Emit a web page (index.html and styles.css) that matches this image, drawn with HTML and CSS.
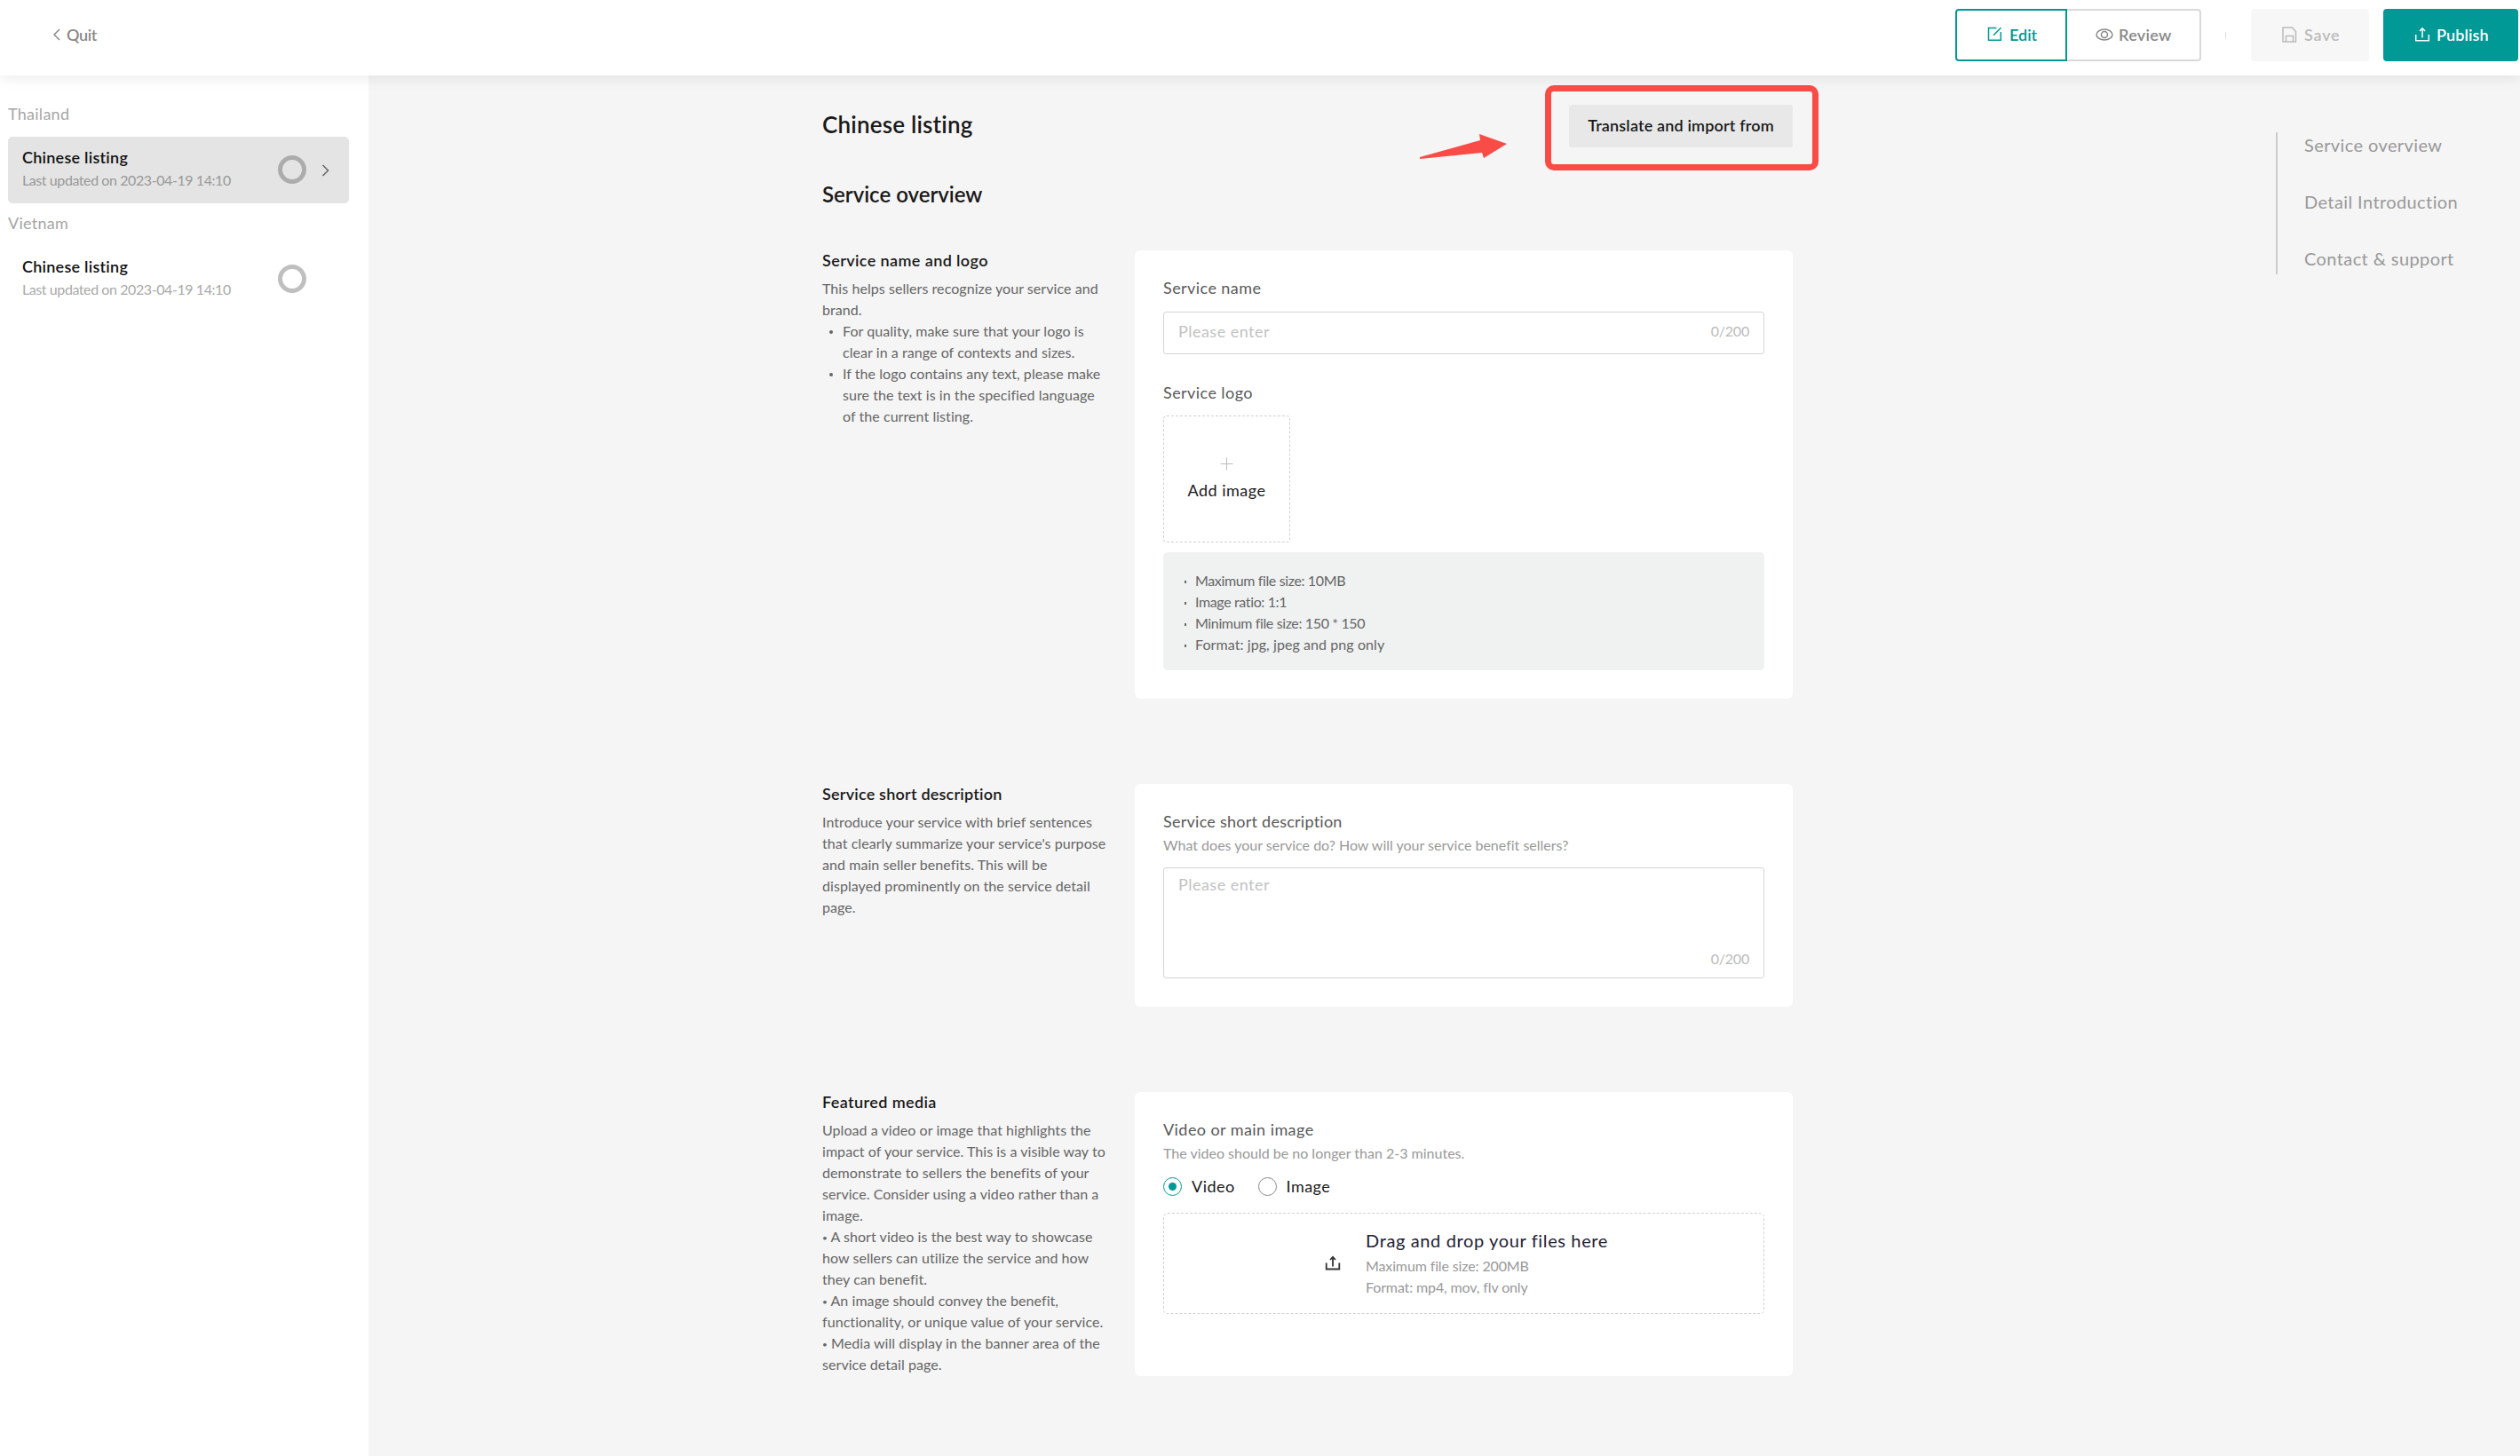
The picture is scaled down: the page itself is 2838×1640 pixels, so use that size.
FILE: index.html
```
<!DOCTYPE html>
<html lang="en">

<head>
    <meta charset="UTF-8">
    <title>Chinese listing</title>
    <link rel="stylesheet" href="styles.css">
</head>

<body>
    <header class="header">
        <a class="quit">
            <svg width="8" height="14" viewBox="0 0 8 14"><path d="M7 1L1 7l6 6" /></svg>
            <span>Quit</span>
        </a>
        <div class="actions">
            <div class="tabs">
                <button class="tab tab-edit current">
                    <svg width="17" height="17" viewBox="0 0 17 17"><path d="M10.500 1.500H1.500V15.200H15.300V6M7 9.800L15.500 1.200" /></svg>
                    <span>Edit</span>
                </button>
                <button class="tab tab-review">
                    <svg width="20" height="14" viewBox="0 0 20 14"><ellipse cx="10" cy="7" rx="9" ry="6" /><ellipse cx="10" cy="7" rx="3.500" ry="3.500" /></svg>
                    <span>Review</span>
                </button>
            </div>
            <i class="divider"></i>
            <button class="btn btn-save">
                <svg width="17" height="18" viewBox="0 0 17 18"><path d="M1 1H11.500L15.500 5.500V17H1zM4.500 17V10.500H12.500V17" /></svg>
                <span>Save</span>
            </button>
            <button class="btn btn-publish">
                <svg width="18" height="17" viewBox="0 0 18 17"><path d="M1.700 9V15.700H16.300V9M9 12.500V2M6 5L9 1.800L12 5" /></svg>
                <span>Publish</span>
            </button>
        </div>
    </header>

    <div class="wrap">
        <aside class="sidebar">
            <div class="region">Thailand</div>
            <div class="item active">
                <div class="item-text">
                    <div class="item-title">Chinese listing</div>
                    <div class="item-time">Last updated on 2023-04-19 14:10</div>
                </div>
                <i class="ring"></i>
                <svg class="arrow" width="9" height="14" viewBox="0 0 9 14"><path d="M1.500 1L7.500 7l-6 6" /></svg>
            </div>
            <div class="region">Vietnam</div>
            <div class="item">
                <div class="item-text">
                    <div class="item-title">Chinese listing</div>
                    <div class="item-time">Last updated on 2023-04-19 14:10</div>
                </div>
                <i class="ring"></i>
            </div>
        </aside>

        <main class="main">
            <div class="top">
                <h1>Chinese listing</h1>
                <div class="translate">
                    <button class="btn-translate">Translate and import from</button>
                    <i class="mark"></i>
                    <svg class="pointer" width="100" height="30" viewBox="0 0 100 30"><path d="M1 27L69 8L68 1L99 12L73 28L71 22L1 29z" /></svg>
                </div>
            </div>
            <h2>Service overview</h2>

            <section class="row row-name">
                <div class="intro">
                    <h3>Service name and logo</h3>
                    <p>This helps sellers recognize your service and<br>brand.</p>
                    <ul>
                        <li>For quality, make sure that your logo is<br>clear in a range of contexts and sizes.</li>
                        <li>If the logo contains any text, please make<br>sure the text is in the specified language<br>of the current listing.</li>
                    </ul>
                </div>
                <div class="card">
                    <div class="label">Service name</div>
                    <div class="input">
                        <span class="placeholder">Please enter</span>
                        <span class="count">0/200</span>
                    </div>
                    <div class="label label-logo">Service logo</div>
                    <div class="upload">
                        <svg width="15" height="15" viewBox="0 0 15 15"><path d="M7.500 0.500V14.500M0.500 7.500H14.500" /></svg>
                        <span>Add image</span>
                    </div>
                    <ul class="rules">
                        <li class="tight">Maximum file size: 10MB</li>
                        <li class="tight">Image ratio: 1:1</li>
                        <li class="tight">Minimum file size: 150 * 150</li>
                        <li>Format: jpg, jpeg and png only</li>
                    </ul>
                </div>
            </section>

            <section class="row row-desc">
                <div class="intro">
                    <h3>Service short description</h3>
                    <p>Introduce your service with brief sentences<br>that clearly summarize your service's purpose<br>and main seller benefits. This will be<br>displayed prominently on the service detail<br>page.</p>
                </div>
                <div class="card">
                    <div class="label">Service short description</div>
                    <div class="hint">What does your service do? How will your service benefit sellers?</div>
                    <div class="textarea">
                        <span class="placeholder">Please enter</span>
                        <span class="count">0/200</span>
                    </div>
                </div>
            </section>

            <section class="row row-media">
                <div class="intro">
                    <h3>Featured media</h3>
                    <p>Upload a video or image that highlights the<br>impact of your service. This is a visible way to<br>demonstrate to sellers the benefits of your<br>service. Consider using a video rather than a<br>image.<br><span class="dot">•</span> A short video is the best way to showcase<br>how sellers can utilize the service and how<br>they can benefit.<br><span class="dot">•</span> An image should convey the benefit,<br>functionality, or unique value of your service.<br><span class="dot">•</span> Media will display in the banner area of the<br>service detail page.</p>
                </div>
                <div class="card">
                    <div class="label">Video or main image</div>
                    <div class="hint">The video should be no longer than 2-3 minutes.</div>
                    <div class="radios">
                        <label class="radio checked"><i></i>Video</label>
                        <label class="radio"><i></i>Image</label>
                    </div>
                    <div class="drop">
                        <svg width="18" height="17" viewBox="0 0 18 17"><path d="M1.700 8.500V15.500H16.300V8.500M9 12.500V2M6 5L9 1.800L12 5" /></svg>
                        <div>
                            <div class="drop-title">Drag and drop your files here</div>
                            <div class="drop-hint">Maximum file size: 200MB</div>
                            <div class="drop-hint">Format: mp4, mov, flv only</div>
                        </div>
                    </div>
                </div>
            </section>
        </main>

        <nav class="anchor">
            <a>Service overview</a>
            <a>Detail Introduction</a>
            <a>Contact &amp; support</a>
        </nav>
    </div>
</body>

</html>
```
FILE: styles.css
```
* {
    box-sizing: border-box;
}

body,
h1,
h2,
h3,
p,
ul,
li {
    margin: 0;
    padding: 0;
}

ul {
    list-style-type: none;
}

body {
    height: 1640px;
    overflow: hidden;
    background: #f5f5f5;
    color: #1a1a1a;
    font: 18px/24px Lato, sans-serif;
    font-variant-ligatures: none;
    white-space: nowrap;
}

svg {
    flex: none;
    fill: none;
    stroke: currentColor;
    stroke-width: 1.5;
}

button {
    display: flex;
    align-items: center;
    border: 0;
    background: none;
    color: inherit;
    font: inherit;
    font-weight: 600;
}

/* header */
.header {
    position: relative;
    display: flex;
    justify-content: space-between;
    height: 85px;
    padding: 10px 2px 0 60px;
    background: #fff;
    box-shadow: 0 2px 16px rgba(0, 0, 0, .09);
}

.quit {
    display: flex;
    align-items: center;
    gap: 7px;
    height: 57px;
    color: #888;
    font-weight: 600;
    letter-spacing: -.4px;
}

.actions {
    display: flex;
    align-items: center;
    height: 59px;
}

.tabs {
    display: flex;
}

.tab {
    height: 59px;
    border: 2px solid #d9d9d9;
    border-left: 0;
    border-radius: 0 4px 4px 0;
    padding: 0 0 2px;
    color: #888;
}

.tab-edit {
    width: 126px;
    padding-left: 34px;
    gap: 8px;
}

.tab-review {
    width: 151px;
    padding-left: 32px;
    gap: 6px;
    letter-spacing: .3px;
}

.tab.current {
    border: 2px solid #009995;
    border-radius: 4px 0 0 4px;
    color: #009995;
}

.divider {
    width: 1px;
    height: 8px;
    margin: 0 28px 0 27px;
    background: #ddd;
}

.btn {
    height: 59px;
    border-radius: 4px;
    padding: 0 0 2px 35px;
}

.btn-save {
    width: 133px;
    gap: 8px;
    background: #f7f7f7;
    color: #bbb;
    letter-spacing: .8px;
}

.btn-publish {
    width: 152px;
    margin-left: 16px;
    gap: 7px;
    background: #009995;
    color: #fff;
    letter-spacing: .1px;
}

.wrap {
    display: flex;
    height: 1555px;
}

/* sidebar */
.sidebar {
    width: 415px;
    padding: 31px 22px 0 9px;
    background: #fff;
}

.region {
    margin-bottom: 14px;
    color: #a6a6a6;
    letter-spacing: .27px;
}

.item {
    display: flex;
    height: 75px;
    margin-bottom: 10px;
    padding: 11px 0 0 16px;
    border-radius: 5px;
}

.item.active {
    background: #e4e4e4;
}

.item-text {
    width: 288px;
}

.item-title {
    color: #111;
    font-weight: 600;
    letter-spacing: .25px;
}

.item-time {
    margin-top: 2px;
    color: #aaa;
    font-size: 16px;
    letter-spacing: -.42px;
}

.ring {
    width: 32px;
    height: 32px;
    margin-top: 10px;
    border: 5px solid #bfbfbf;
    border-radius: 50%;
}

.active .item-time {
    color: #999;
}

.active .ring {
    border-color: #acacac;
}

.arrow {
    margin: 20px 0 0 17px;
    color: #666;
}

/* content */
.main {
    width: 1093px;
    margin-left: 511px;
    padding-top: 33px;
}

.top {
    display: flex;
    justify-content: space-between;
    height: 48px;
}

h1 {
    font-size: 26px;
    line-height: 44px;
    font-weight: 600;
    letter-spacing: .2px;
}

h2 {
    margin: 37px 0 47px;
    font-size: 24px;
    line-height: 32px;
    font-weight: 600;
}

h3 {
    font-size: 18px;
    line-height: 23px;
    font-weight: 600;
    letter-spacing: .4px;
}

.row-desc h3 {
    letter-spacing: .22px;
}

.translate {
    position: relative;
}

.btn-translate {
    justify-content: center;
    width: 252px;
    height: 48px;
    padding: 0 0 3px;
    border-radius: 3px;
    background: #e8e8e8;
    letter-spacing: .17px;
}

/* red highlight around the button */
.mark {
    position: absolute;
    top: -22px;
    left: -27px;
    width: 308px;
    height: 96px;
    border: 7px solid #f94c47;
    border-radius: 10px;
}

.pointer {
    position: absolute;
    top: 32px;
    left: -169px;
    fill: #f94c47;
    stroke: none;
}

.row {
    display: flex;
    justify-content: space-between;
    margin-bottom: 96px;
}

.row-name {
    height: 505px;
}

.row-desc {
    height: 251px;
}

.row-media {
    height: 320px;
}

.intro p,
.intro ul {
    color: #666;
    font-size: 16px;
    letter-spacing: .06px;
}

.intro p {
    margin-top: 8px;
}

.intro li {
    position: relative;
    padding-left: 23px;
}

.intro li::before {
    content: "";
    position: absolute;
    top: 11px;
    left: 8px;
    width: 4px;
    height: 4px;
    border-radius: 50%;
    background: #666;
}

.dot {
    font-size: 10px;
    line-height: 1;
    vertical-align: 1px;
}

.card {
    width: 741px;
    padding: 32px;
    border-radius: 6px;
    background: #fff;
}

.label {
    color: #595959;
    line-height: 21px;
    letter-spacing: .43px;
}

.row-desc .label {
    letter-spacing: .25px;
}

.label-logo {
    margin-top: 33px;
}

.hint {
    margin-top: 4px;
    color: #999;
    font-size: 16px;
}

.input,
.textarea {
    display: flex;
    justify-content: space-between;
    border: 1px solid #d4d4d4;
    border-radius: 3px;
    padding: 9px 16px;
}

.input {
    height: 48px;
    margin-top: 16px;
}

.textarea {
    height: 125px;
    margin-top: 13px;
    padding-top: 6px;
}

.placeholder {
    color: #c2c2c2;
    letter-spacing: .48px;
}

.count {
    color: #bbb;
    font-size: 16px;
    letter-spacing: -.2px;
}

.textarea .count {
    align-self: flex-end;
}

.upload {
    display: flex;
    flex-direction: column;
    align-items: center;
    width: 143px;
    height: 143px;
    margin-top: 15px;
    padding-top: 46px;
    border: 1px dashed #d0d0d0;
    border-radius: 4px;
    letter-spacing: .5px;
}

.upload svg {
    margin-bottom: 10px;
    color: #bbb;
    stroke-width: 1;
}

.rules {
    height: 133px;
    margin-top: 11px;
    padding: 20px 24px;
    border-radius: 5px;
    background: #f0f2f2;
    color: #666;
    font-size: 16px;
    letter-spacing: .08px;
}

.rules .tight {
    letter-spacing: -.37px;
}

.rules li {
    display: flex;
    align-items: center;
}

.rules li::before {
    content: "";
    width: 2px;
    height: 3px;
    margin: 2px 10px 0 0;
    background: #666;
}

.radios {
    display: flex;
    gap: 26px;
    margin: 15px 0 18px;
}

.radio {
    display: flex;
    gap: 11px;
    height: 22px;
    line-height: 20px;
    letter-spacing: .45px;
}

.radio i {
    display: flex;
    align-items: center;
    justify-content: center;
    width: 21px;
    height: 21px;
    border: 1px solid #888;
    border-radius: 50%;
}

.radio.checked i {
    border-color: #009995;
}

.checked i::before {
    content: "";
    width: 9px;
    height: 9px;
    border-radius: 50%;
    background: #009995;
}

.drop {
    display: flex;
    height: 114px;
    padding: 18px 0 0 181px;
    border: 1px dashed #d0d0d0;
    border-radius: 5px;
}

.drop svg {
    margin: 29px 28px 0 0;
    color: #333;
    stroke-width: 1.8;
}

.drop-title {
    margin-bottom: 5px;
    color: #222233;
    font-size: 20px;
    letter-spacing: .63px;
}

.drop-hint {
    color: #999;
    font-size: 16px;
    letter-spacing: -.13px;
}

/* page anchors */
.anchor {
    display: flex;
    flex-direction: column;
    gap: 40px;
    height: 160px;
    margin: 64px 0 0 544px;
    padding: 2px 0 0 30px;
    border-left: 2px solid #ccc;
    color: #999;
    font-size: 20px;
    letter-spacing: .4px;
}
```
